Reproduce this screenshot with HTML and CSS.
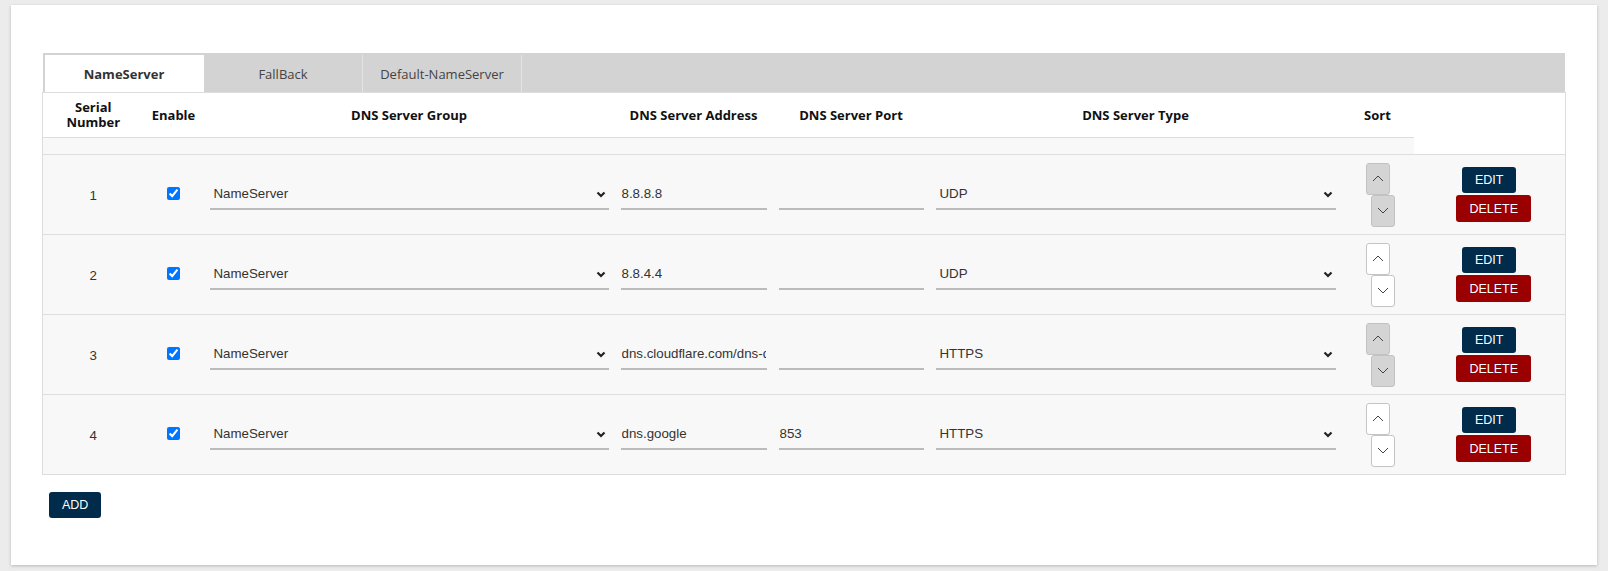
FILE: index.html
```html
<!DOCTYPE html>
<html>
<head>
<meta charset="utf-8">
<link rel="stylesheet" href="styles.css">
</head>
<body>
<div class="card">
  <div class="tabs">
    <div class="tab active">NameServer</div>
    <div class="tab">FallBack</div>
    <div class="tab">Default-NameServer</div>
  </div>
  <table class="dns">
    <colgroup>
      <col class="c-serial"><col class="c-enable"><col class="c-group"><col class="c-addr"><col class="c-port"><col class="c-type"><col class="c-sort"><col class="c-act">
    </colgroup>
    <thead>
      <tr>
        <th><span class="l">Serial</span><span class="l">Number</span></th>
        <th>Enable</th>
        <th>DNS Server Group</th>
        <th>DNS Server Address</th>
        <th>DNS Server Port</th>
        <th>DNS Server Type</th>
        <th>Sort</th>
      </tr>
    </thead>
    <tbody>
      <tr class="spacer"><td></td><td></td><td></td><td></td><td></td><td></td><td></td></tr>

      <tr class="row">
        <td class="num">1</td>
        <td class="chk"><input type="checkbox" checked></td>
        <td><div class="sel"><select><option>NameServer</option></select><svg class="caret" width="10" height="7" viewBox="0 0 10 7"><polyline points="1.5,1.5 5,5 8.5,1.5" fill="none" stroke="#222" stroke-width="2.2"/></svg></div></td>
        <td><input class="txt" type="text" value="8.8.8.8"></td>
        <td><input class="txt" type="text" value=""></td>
        <td><div class="sel"><select><option>UDP</option></select><svg class="caret" width="10" height="7" viewBox="0 0 10 7"><polyline points="1.5,1.5 5,5 8.5,1.5" fill="none" stroke="#222" stroke-width="2.2"/></svg></div></td>
        <td class="sortcell"><div class="sort"><button class="sb grey"><svg width="12" height="7" viewBox="0 0 12 7"><polyline points="1,6 6,1 11,6" fill="none" stroke="#444" stroke-width="1"/></svg></button><button class="sb grey down"><svg width="12" height="7" viewBox="0 0 12 7"><polyline points="1,1 6,6 11,1" fill="none" stroke="#444" stroke-width="1"/></svg></button></div></td>
        <td><div class="acts"><button class="btn edit">EDIT</button><button class="btn del">DELETE</button></div></td>
      </tr>

      <tr class="row">
        <td class="num">2</td>
        <td class="chk"><input type="checkbox" checked></td>
        <td><div class="sel"><select><option>NameServer</option></select><svg class="caret" width="10" height="7" viewBox="0 0 10 7"><polyline points="1.5,1.5 5,5 8.5,1.5" fill="none" stroke="#222" stroke-width="2.2"/></svg></div></td>
        <td><input class="txt" type="text" value="8.8.4.4"></td>
        <td><input class="txt" type="text" value=""></td>
        <td><div class="sel"><select><option>UDP</option></select><svg class="caret" width="10" height="7" viewBox="0 0 10 7"><polyline points="1.5,1.5 5,5 8.5,1.5" fill="none" stroke="#222" stroke-width="2.2"/></svg></div></td>
        <td class="sortcell"><div class="sort"><button class="sb"><svg width="12" height="7" viewBox="0 0 12 7"><polyline points="1,6 6,1 11,6" fill="none" stroke="#444" stroke-width="1"/></svg></button><button class="sb down"><svg width="12" height="7" viewBox="0 0 12 7"><polyline points="1,1 6,6 11,1" fill="none" stroke="#444" stroke-width="1"/></svg></button></div></td>
        <td><div class="acts"><button class="btn edit">EDIT</button><button class="btn del">DELETE</button></div></td>
      </tr>

      <tr class="row">
        <td class="num">3</td>
        <td class="chk"><input type="checkbox" checked></td>
        <td><div class="sel"><select><option>NameServer</option></select><svg class="caret" width="10" height="7" viewBox="0 0 10 7"><polyline points="1.5,1.5 5,5 8.5,1.5" fill="none" stroke="#222" stroke-width="2.2"/></svg></div></td>
        <td><input class="txt" type="text" value="dns.cloudflare.com/dns-query"></td>
        <td><input class="txt" type="text" value=""></td>
        <td><div class="sel"><select><option>HTTPS</option></select><svg class="caret" width="10" height="7" viewBox="0 0 10 7"><polyline points="1.5,1.5 5,5 8.5,1.5" fill="none" stroke="#222" stroke-width="2.2"/></svg></div></td>
        <td class="sortcell"><div class="sort"><button class="sb grey"><svg width="12" height="7" viewBox="0 0 12 7"><polyline points="1,6 6,1 11,6" fill="none" stroke="#444" stroke-width="1"/></svg></button><button class="sb grey down"><svg width="12" height="7" viewBox="0 0 12 7"><polyline points="1,1 6,6 11,1" fill="none" stroke="#444" stroke-width="1"/></svg></button></div></td>
        <td><div class="acts"><button class="btn edit">EDIT</button><button class="btn del">DELETE</button></div></td>
      </tr>

      <tr class="row">
        <td class="num">4</td>
        <td class="chk"><input type="checkbox" checked></td>
        <td><div class="sel"><select><option>NameServer</option></select><svg class="caret" width="10" height="7" viewBox="0 0 10 7"><polyline points="1.5,1.5 5,5 8.5,1.5" fill="none" stroke="#222" stroke-width="2.2"/></svg></div></td>
        <td><input class="txt" type="text" value="dns.google"></td>
        <td><input class="txt" type="text" value="853"></td>
        <td><div class="sel"><select><option>HTTPS</option></select><svg class="caret" width="10" height="7" viewBox="0 0 10 7"><polyline points="1.5,1.5 5,5 8.5,1.5" fill="none" stroke="#222" stroke-width="2.2"/></svg></div></td>
        <td class="sortcell"><div class="sort"><button class="sb"><svg width="12" height="7" viewBox="0 0 12 7"><polyline points="1,6 6,1 11,6" fill="none" stroke="#444" stroke-width="1"/></svg></button><button class="sb down"><svg width="12" height="7" viewBox="0 0 12 7"><polyline points="1,1 6,6 11,1" fill="none" stroke="#444" stroke-width="1"/></svg></button></div></td>
        <td><div class="acts"><button class="btn edit">EDIT</button><button class="btn del">DELETE</button></div></td>
      </tr>
    </tbody>
  </table>
  <div class="footer">
    <button class="btn add">ADD</button>
  </div>
</div>
</body>
</html>
```

FILE: styles.css
```css
html, body {
  margin: 0;
  padding: 0;
}
body {
  background: #ececec;
  padding: 5px 11px 6px 11px;
  font-family: "Liberation Sans", Arial, sans-serif;
  font-size: 13.3px;
  color: #333;
}
.card {
  background: #fff;
  box-shadow: 0 1px 3px rgba(0, 0, 0, 0.22);
  padding: 48px 31px 48px 31px;
  height: 560px;
  box-sizing: border-box;
}
.tabs {
  display: flex;
  background: #d3d3d3;
  margin: 0 1px;
  height: 39px;
  padding: 2px 0 0 2px;
  box-sizing: border-box;
}
.tab {
  width: 159px;
  border-right: 1px solid #e4e4e4;
  display: flex;
  align-items: center;
  justify-content: center;
  font-family: "Open Sans", "Noto Sans", sans-serif;
  font-size: 13px;
  color: #444;
  padding-top: 1px;
  box-sizing: border-box;
}
.tab.active {
  background: #fff;
  font-weight: 700;
  color: #333;
  border-right-color: #fff;
}
.dns {
  width: 1524px;
  border-collapse: collapse;
  table-layout: fixed;
  border: 1px solid #ddd;
  background: #fff;
}
.c-serial { width: 101px; }
.c-enable { width: 60px; }
.c-group { width: 411px; }
.c-addr { width: 158px; }
.c-port { width: 157px; }
.c-type { width: 412px; }
.c-sort { width: 72px; }
.c-act { width: 152px; }
.dns th {
  height: 44px;
  padding: 0 4px;
  font-family: "Open Sans", "Noto Sans", sans-serif;
  font-size: 13px;
  font-weight: 700;
  line-height: 15px;
  color: #111;
  text-align: center;
  vertical-align: middle;
  border-bottom: 1px solid #ddd;
}
.dns th .l {
  display: block;
  line-height: 15px;
}
.spacer td {
  height: 16px;
  padding: 0;
  background: #f8f8f8;
}
.row td {
  height: 78px;
  padding: 0 6px;
  background: #f8f8f8;
  border-top: 1px solid #ddd;
  vertical-align: middle;
}
.row td.num {
  text-align: center;
  padding-top: 1px;
}
.row td.chk {
  text-align: center;
}
.chk input {
  margin: 0 0 2px 0;
  width: 13px;
  height: 13px;
  vertical-align: middle;
}
.sel {
  position: relative;
  height: 30px;
}
.sel select {
  appearance: none;
  -webkit-appearance: none;
  width: 100%;
  height: 30px;
  border: none;
  border-bottom: 2px solid #bbb;
  background: transparent;
  font-family: "Liberation Sans", Arial, sans-serif;
  font-size: 13.3px;
  color: #333;
  padding: 0 20px 0 4px;
  border-radius: 0;
  outline: none;
}
.caret {
  position: absolute;
  right: 3px;
  top: 11px;
}
.txt {
  display: block;
  width: 100%;
  box-sizing: border-box;
  height: 30px;
  border: none;
  border-bottom: 2px solid #bbb;
  background: transparent;
  font-family: "Liberation Sans", Arial, sans-serif;
  font-size: 13.3px;
  color: #333;
  padding: 0 1px;
  outline: none;
}
.row td.sortcell {
  padding-left: 24px;
}
.sort {
  display: flex;
  flex-direction: column;
  align-items: flex-start;
}
.sb {
  width: 24px;
  height: 32px;
  padding: 0;
  margin: 0;
  border: 1px solid #c4c4c4;
  border-radius: 3px;
  background: #fff;
  display: flex;
  align-items: center;
  justify-content: center;
}
.sb.grey {
  background: #d4d4d4;
  border-color: #c2c2c2;
}
.sb.down {
  margin-left: 5px;
}
.acts {
  display: flex;
  flex-direction: column;
  align-items: center;
}
.btn {
  border: none;
  border-radius: 3px;
  color: #fff;
  font-family: "Liberation Sans", Arial, sans-serif;
  font-size: 12.5px;
  padding: 0 13px;
  margin: 0;
}
.edit {
  background: #002b4b;
  height: 26px;
}
.del {
  background: #9a0000;
  height: 27px;
  margin-top: 2px;
  margin-left: 9px;
}
.footer {
  padding: 17px 0 0 7px;
}
.add {
  background: #002b4b;
  height: 26px;
  padding: 0 13px;
}
```
